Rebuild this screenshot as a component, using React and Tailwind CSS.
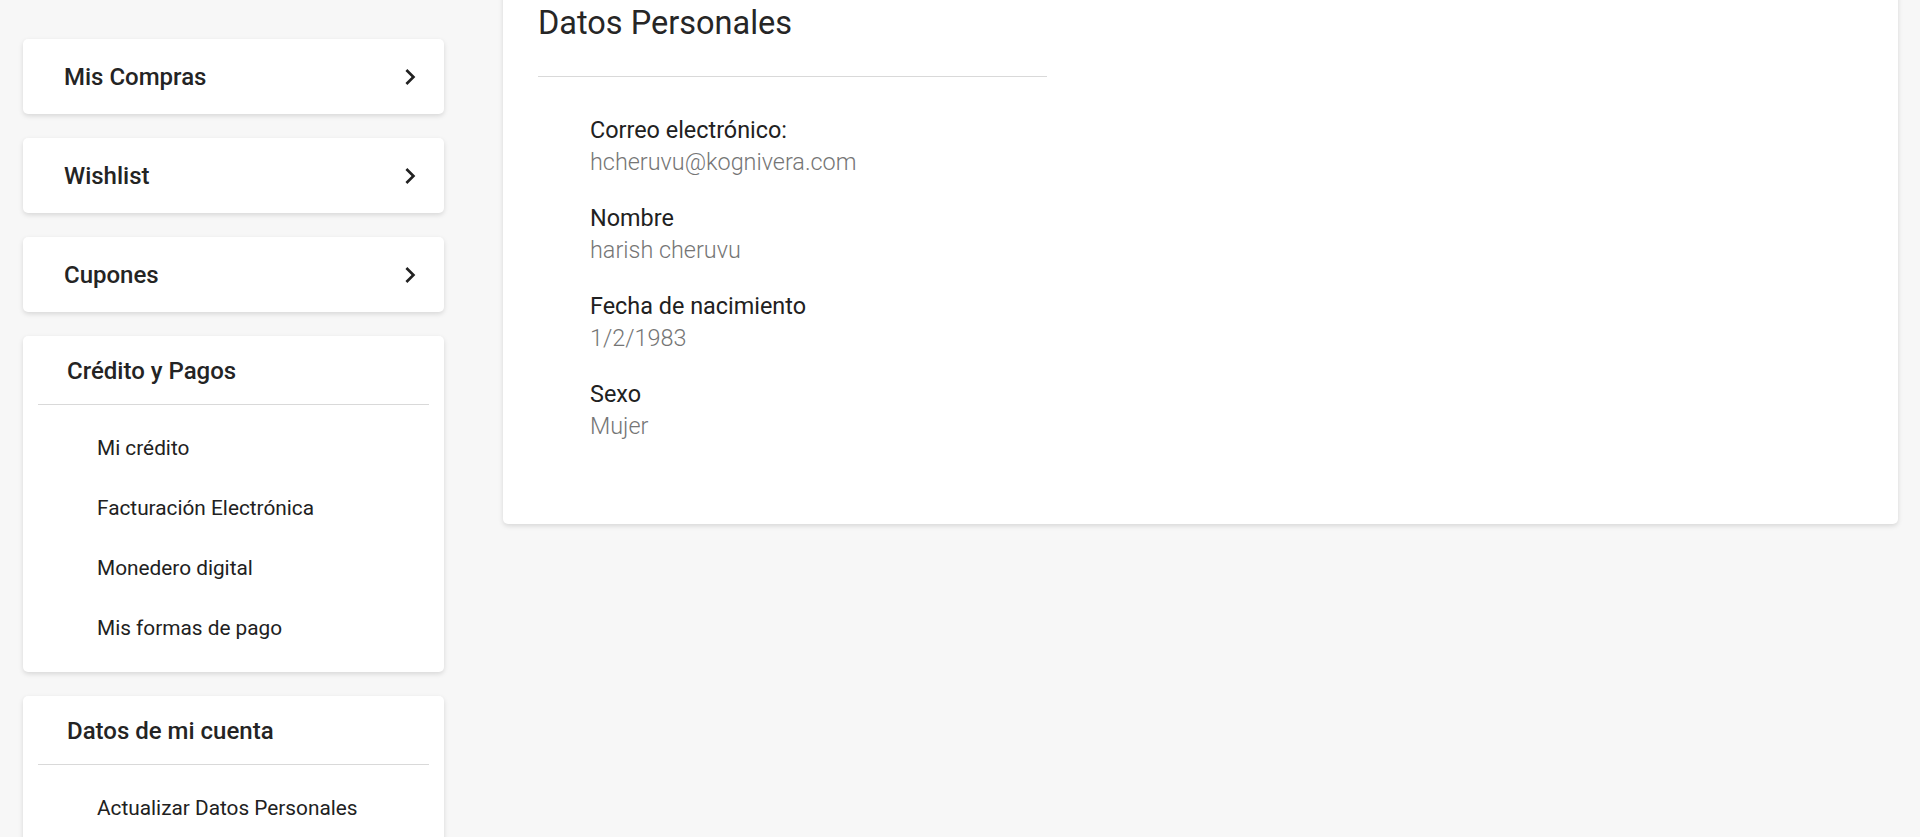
import React from "react";
import { MdChevronRight } from "react-icons/md";

const navCards = ["Mis Compras", "Wishlist", "Cupones"];

const sections = [
  {
    title: "Crédito y Pagos",
    items: ["Mi crédito", "Facturación Electrónica", "Monedero digital", "Mis formas de pago"],
  },
  {
    title: "Datos de mi cuenta",
    items: ["Actualizar Datos Personales"],
  },
];

const fields = [
  ["Correo electrónico:", "hcheruvu@kognivera.com"],
  ["Nombre", "harish cheruvu"],
  ["Fecha de nacimiento", "1/2/1983"],
  ["Sexo", "Mujer"],
];

const card = "bg-white rounded-[5px] shadow-[0_2px_5px_rgba(0,0,0,0.13)]";

export default function App() {
  return (
    <div
      className="h-[837px] overflow-hidden bg-[#f7f7f7] text-[#212121]"
      style={{ fontFamily: "Roboto, 'Noto Sans', Arial, sans-serif" }}
    >
      <div className="flex items-start gap-[59px] pl-[23px] pr-[22px]">
        <aside className="w-[421px] shrink-0 flex flex-col gap-[24px] pt-[39px]">
          {navCards.map((t) => (
            <div key={t} className={`${card} h-[75px] flex items-center justify-between pl-[41px] pr-[18px]`}>
              <span className="text-[24px] font-medium leading-[30px] text-[#242424]">{t}</span>
              <MdChevronRight className="w-[32px] h-[32px] text-[#212121]" />
            </div>
          ))}
          {sections.map((s) => (
            <div key={s.title} className={`${card} pt-[17px] pb-[14px]`}>
              <div className="pl-[44px] text-[24px] font-medium leading-[36px] text-[#242424]">{s.title}</div>
              <div className="mx-[15px] mt-[15px] h-px bg-[#d9d9d9]" />
              <ul className="mt-[13px]">
                {s.items.map((i) => (
                  <li key={i} className="pl-[74px] text-[20.8px] leading-[60px]">
                    {i}
                  </li>
                ))}
              </ul>
            </div>
          ))}
        </aside>
        <main className={`${card} flex-1 -mt-[20px] pt-[24px] pb-[82px] pl-[35px]`}>
          <h1 className="text-[32.5px] font-normal leading-[38px] text-[#262626]">Datos Personales</h1>
          <div className="mt-[34px] w-[509px] h-px bg-[#d9d9d9]" />
          <dl className="mt-[37px] pl-[52px] flex flex-col gap-[24px]">
            {fields.map(([k, v]) => (
              <div key={k}>
                <dt className="text-[23.4px] leading-[32px] text-[#212121]">{k}</dt>
                <dd className="text-[23.4px] leading-[32px] font-light text-[#757575]">{v}</dd>
              </div>
            ))}
          </dl>
        </main>
      </div>
    </div>
  );
}
